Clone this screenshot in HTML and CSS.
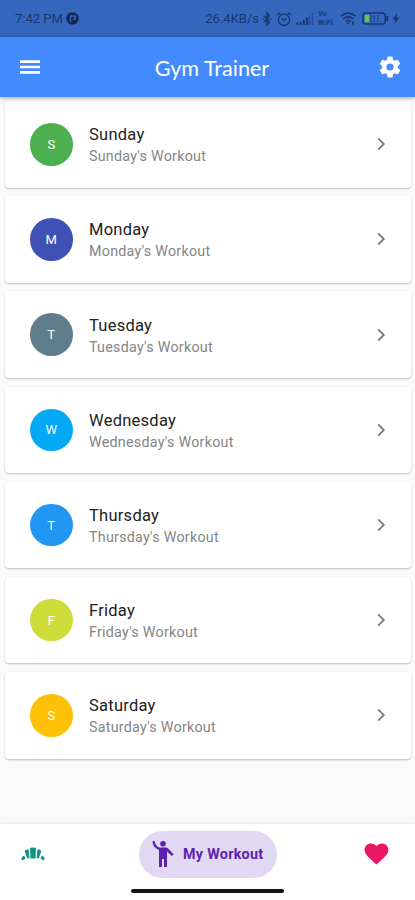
FILE: index.html
```html
<!DOCTYPE html>
<html lang="en">
<head>
<meta charset="utf-8">
<title>Gym Trainer</title>
<link rel="stylesheet" href="styles.css">
</head>
<body>
<div class="app">
  <div class="status">
    <span class="time">7:42 PM</span>
    <svg class="app-mark" width="13" height="13" viewBox="0 0 13 13"><circle cx="6.5" cy="6.5" r="6.2" fill="#112654"/><path d="M4.5 10V4H9.2v3H7" fill="none" stroke="#3467bd" stroke-width="1.5"/></svg>
    <span class="speed">26.4KB/s</span>
    <svg class="bt" width="10" height="16" viewBox="0 0 10 16"><path d="M1.5 4.5l6 6.5L5 14V2l2.5 3-6 6.5M.3 8h1.2M8 8h1.5" fill="none" stroke="#18376f" stroke-width="1.5"/></svg>
    <svg class="alarm" width="16" height="16" viewBox="0 0 16 16"><g fill="none" stroke="#18376f" stroke-width="1.5"><circle cx="8" cy="8.7" r="5.6"/><path d="M1 4l3-2.5M15 4l-3-2.5M5.5 7.5L8 9.3l2.5-1.8"/></g></svg>
    <svg class="signal" width="18" height="14" viewBox="0 0 18 14"><path d="M1.2 13v-2.5M4.5 13V9.8M7.8 13V8M11.1 13V5.3" stroke="#18376f" stroke-width="2"/><path d="M14 13V3.5M16.5 13V1" stroke="#2851a0" stroke-width="1.4"/></svg>
    <span class="vowifi"><span>Vo</span><span>WiFi</span></span>
    <svg class="wifi" width="17" height="15" viewBox="0 0 17 15"><g fill="none" stroke="#18376f" stroke-width="1.6"><path d="M1 5.2q7-6 14.5 0M3.2 8q5-4.3 10 0M5.6 10.6q2.7-2.3 5.3 0"/></g><path d="M6.5 11.5h3.5L8.2 13.7zM12 10.5h2v3h-2z" fill="#18376f"/></svg>
    <svg class="battery" width="27" height="13" viewBox="0 0 27 13"><rect x=".8" y="1" width="22.5" height="11" rx="3" fill="none" stroke="#18376f" stroke-width="1.5"/><rect x="2.8" y="2.8" width="4.5" height="7.4" rx="1" fill="#62c751"/><path d="M9 3v7M12.2 3v7M16 3v7" stroke="#24488d" stroke-width="1.4"/><path d="M25.2 4v5" stroke="#18376f" stroke-width="2"/></svg>
    <svg class="bolt" width="8" height="13" viewBox="0 0 8 13"><path d="M5.3 1L.5 7.4h2.8L2.4 12 7.5 5.5H4.6z" fill="#18376f"/></svg>
  </div>
  <header class="bar">
    <svg width="20" height="16" viewBox="0 0 20 16"><path d="M0 2.6h20M0 8h20M0 13.4h20" stroke="#fff" stroke-width="2.6"/></svg>
    <h1>Gym Trainer</h1>
    <svg class="gear" width="26" height="26" viewBox="0 0 24 24"><path fill="#fff" d="M19.14 12.94c.04-.3.06-.61.06-.94s-.02-.64-.07-.94l2.03-1.58a.49.49 0 0 0 .12-.61l-1.92-3.32a.49.49 0 0 0-.59-.22l-2.39.96a7 7 0 0 0-1.62-.94l-.36-2.54a.48.48 0 0 0-.48-.41h-3.84a.48.48 0 0 0-.47.41l-.36 2.54a7 7 0 0 0-1.62.94l-2.39-.96a.49.49 0 0 0-.59.22L2.74 8.87a.48.48 0 0 0 .12.61l2.03 1.58a6 6 0 0 0 0 1.88l-2.03 1.58a.49.49 0 0 0-.12.61l1.92 3.32c.12.22.37.29.59.22l2.39-.96c.5.38 1.03.7 1.62.94l.36 2.54c.05.24.24.41.48.41h3.84c.24 0 .44-.17.47-.41l.36-2.54a7 7 0 0 0 1.62-.94l2.39.96c.22.08.47 0 .59-.22l1.92-3.32a.49.49 0 0 0-.12-.61zM12 15.3a3.3 3.3 0 1 1 0-6.6 3.3 3.3 0 0 1 0 6.6z"/></svg>
  </header>
  <main class="list">
    <div class="card"><div class="dot green">S</div><div class="text"><div class="day">Sunday</div><div class="sub">Sunday's Workout</div></div><svg class="chev" width="9" height="14" viewBox="0 0 9 14"><path d="M1.2 1.4L6.8 7l-5.6 5.6" fill="none" stroke="#7c7c7c" stroke-width="1.8"/></svg></div>
    <div class="card"><div class="dot indigo">M</div><div class="text"><div class="day">Monday</div><div class="sub">Monday's Workout</div></div><svg class="chev" width="9" height="14" viewBox="0 0 9 14"><path d="M1.2 1.4L6.8 7l-5.6 5.6" fill="none" stroke="#7c7c7c" stroke-width="1.8"/></svg></div>
    <div class="card"><div class="dot slate">T</div><div class="text"><div class="day">Tuesday</div><div class="sub">Tuesday's Workout</div></div><svg class="chev" width="9" height="14" viewBox="0 0 9 14"><path d="M1.2 1.4L6.8 7l-5.6 5.6" fill="none" stroke="#7c7c7c" stroke-width="1.8"/></svg></div>
    <div class="card"><div class="dot sky">W</div><div class="text"><div class="day">Wednesday</div><div class="sub">Wednesday's Workout</div></div><svg class="chev" width="9" height="14" viewBox="0 0 9 14"><path d="M1.2 1.4L6.8 7l-5.6 5.6" fill="none" stroke="#7c7c7c" stroke-width="1.8"/></svg></div>
    <div class="card"><div class="dot blue">T</div><div class="text"><div class="day">Thursday</div><div class="sub">Thursday's Workout</div></div><svg class="chev" width="9" height="14" viewBox="0 0 9 14"><path d="M1.2 1.4L6.8 7l-5.6 5.6" fill="none" stroke="#7c7c7c" stroke-width="1.8"/></svg></div>
    <div class="card"><div class="dot lime">F</div><div class="text"><div class="day">Friday</div><div class="sub">Friday's Workout</div></div><svg class="chev" width="9" height="14" viewBox="0 0 9 14"><path d="M1.2 1.4L6.8 7l-5.6 5.6" fill="none" stroke="#7c7c7c" stroke-width="1.8"/></svg></div>
    <div class="card"><div class="dot amber">S</div><div class="text"><div class="day">Saturday</div><div class="sub">Saturday's Workout</div></div><svg class="chev" width="9" height="14" viewBox="0 0 9 14"><path d="M1.2 1.4L6.8 7l-5.6 5.6" fill="none" stroke="#7c7c7c" stroke-width="1.8"/></svg></div>
  </main>
  <nav class="nav">
    <div class="tabs">
      <svg width="24" height="14" viewBox="0 0 24 14"><g fill="#129480"><path d="M9 .8Q12 0 15 .8L14.5 11.5h-5z"/><path d="M3.6 4Q5 2.4 7.6 2.2L8.5 11.3H6.2z"/><path d="M20.4 4Q19 2.4 16.4 2.2l-.9 9.1h2.3z"/><path d="M.4 11.3Q1.2 9.2 3.2 8.8L4.5 11.2Q3 13.3 1 13.4z"/><path d="M23.6 11.3Q22.8 9.2 20.8 8.8l-1.3 2.4q1.5 2.1 3.5 2.2z"/></g></svg>
      <div class="pill">
        <svg width="22" height="28" viewBox="0 0 22 28"><g fill="#5d20b1"><circle cx="11" cy="3.7" r="2.8"/><path d="M.4 1.6L2.6.8C3.2 4.3 4.6 6.8 7.2 7.4h6.6c1.3 0 2 .5 2.8 1.5l5 5.4-1.8 1.8-4.8-4.6V27h-3v-8h-2v8H7V9.7C3.2 8.8.9 5.7.4 1.6z"/></g></svg>
        <span>My Workout</span>
      </div>
      <svg width="25" height="22" viewBox="0 0 25 22"><path d="M12.5 21.5L10.7 19.9C4.2 14 .6 10.9.6 6.8.6 3.2 3.4.6 6.9.6c2.2 0 4.3 1 5.6 2.7C13.8 1.6 15.9.6 18.1.6c3.5 0 6.3 2.6 6.3 6.2 0 4.1-3.6 7.2-10.1 13.1z" fill="#ea1765"/></svg>
    </div>
    <div class="handle"></div>
  </nav>
</div>
</body>
</html>
```
FILE: styles.css
```css
* { box-sizing: border-box; }
body { margin: 0; background: #fafafa; font-family: Roboto, "Noto Sans", sans-serif; }
svg { display: block; flex: none; }
.app { width: 415px; height: 900px; display: flex; flex-direction: column; overflow: hidden; }
.status { height: 37px; flex: none; background: #3467bd; display: flex; align-items: center; padding: 0 15px; color: #18376f; white-space: nowrap; }
.time { font-size: 13px; width: 48px; }
.app-mark { margin-left: 3px; }
.speed { margin-left: auto; font-size: 13px; }
.bt { margin-left: 3px; }
.alarm { margin-left: 4px; }
.signal { margin-left: 4px; }
.vowifi { width: 18px; margin-left: 4px; display: flex; flex-direction: column; font-size: 7px; line-height: 8.5px; font-weight: 700; letter-spacing: .4px; }
.wifi { margin-left: 4px; }
.battery { margin-left: 5px; }
.bolt { margin-left: 3px; }
.bar { height: 60px; flex: none; background: #448aff; display: flex; align-items: center; justify-content: space-between; padding: 0 12px 0 20px; position: relative; z-index: 1; box-shadow: 0 1px 5px rgba(0,0,0,.35); }
.bar h1 { margin: 1px 0 0 7px; font: 400 21.6px Lato, sans-serif; color: #fff; }
.list { flex: 1; padding: 4px 4px 0 5px; display: flex; flex-direction: column; gap: 8.7px; }
.card { height: 86.5px; flex: none; background: #fff; border-radius: 4px; box-shadow: 0 1px 2px rgba(0,0,0,.24); display: flex; align-items: center; padding: 0 25px; }
.dot { width: 42.5px; height: 42.5px; border-radius: 50%; color: #fff; font-size: 13px; display: flex; align-items: center; justify-content: center; flex: none; }
.green { background: #4caf50; }
.indigo { background: #3f51b5; }
.slate { background: #607d8b; }
.sky { background: #03a9f4; }
.blue { background: #2196f3; }
.lime { background: #cddc39; }
.amber { background: #ffc107; }
.text { margin-left: 16.5px; padding-top: 3px; flex: 1; }
.day { font-size: 16.5px; line-height: 22px; color: #212121; letter-spacing: .25px; }
.sub { font-size: 14.3px; line-height: 21px; color: #858585; letter-spacing: .25px; }
.nav { height: 76px; flex: none; background: #fff; box-shadow: 0 0 4px rgba(0,0,0,.12); display: flex; flex-direction: column; align-items: center; }
.tabs { width: 100%; height: 60px; padding: 0 26px 0 21px; display: flex; align-items: center; justify-content: space-between; }
.pill { width: 138px; height: 47px; margin-left: 7px; border-radius: 24px; background: #e1d8f3; display: flex; align-items: center; padding-left: 13px; gap: 9px; color: #5d20b1; font-size: 14.3px; font-weight: 700; letter-spacing: .3px; white-space: nowrap; }
.handle { width: 153px; height: 4px; margin-top: 4.5px; border-radius: 2px; background: #161616; }
```
